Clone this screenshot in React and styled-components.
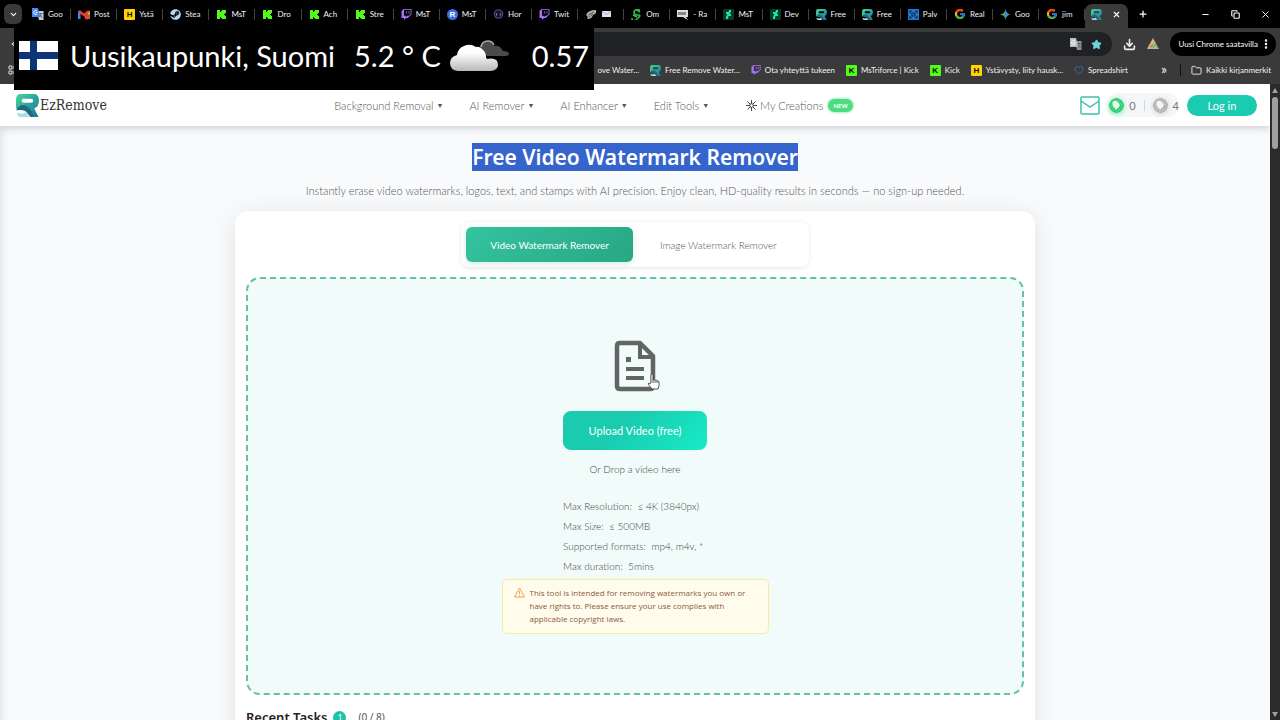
import React from 'react';
import styled, { createGlobalStyle, css } from 'styled-components';
import { ChevronDown, Minus, Copy, X, Plus, Star, Download, Folder, ArrowLeft, MoreVertical, Heart } from 'lucide-react';
import { FaSteam, FaTwitch } from 'react-icons/fa';
import { FcGoogle } from 'react-icons/fc';

const GlobalStyle = createGlobalStyle`
  * {
    box-sizing: border-box;
  }
  body {
    margin: 0;
    background: #000;
    font-family: Lato, 'Noto Sans', sans-serif;
  }
  button, a {
    font-family: inherit;
    color: inherit;
    text-decoration: none;
  }
  button {
    border: 0;
    padding: 0;
    background: none;
  }
  svg {
    display: block;
    flex: none;
  }
`;

const Browser = styled.div`
  position: relative;
  display: flex;
  flex-direction: column;
  height: 100vh;
  overflow: hidden;
`;

const chromeText = css`
  font-family: Lato, 'Noto Sans', sans-serif;
  font-size: 8px;
  white-space: nowrap;
  color: #f2f2f2;
`;

const TabStrip = styled.div`
  ${chromeText}
  display: flex;
  flex: none;
  height: 28px;
  background: #000;
`;

const TabSearch = styled.button`
  display: flex;
  align-items: center;
  justify-content: center;
  width: 18px;
  height: 20px;
  margin: 4px 3px 0 4px;
  border-radius: 6px;
  background: #3a3a3a;
  color: #fff;
`;

const TabList = styled.div`
  display: flex;
  flex: 1;
  min-width: 0;
`;

const Tab = styled.button`
  ${chromeText}
  display: flex;
  align-items: center;
  flex: 1 1 0;
  min-width: 0;
  gap: 4px;
  padding-left: 7px;
  text-align: left;
  background: linear-gradient(#444, #444) no-repeat right center / 1px 11px;
`;

const ActiveTab = styled.div`
  display: flex;
  align-items: center;
  justify-content: space-between;
  width: 43px;
  margin-top: 4px;
  padding: 0 7px 4px 6px;
  border-radius: 7px 7px 0 0;
  background: #3a3a3a;
  color: #fff;
`;

const StripButton = styled.button`
  display: flex;
  align-items: center;
  justify-content: center;
  width: 30px;
  height: 28px;
  color: #fff;
`;

const StripSpacer = styled.div`
  width: 32px;
`;

const Toolbar = styled.div`
  ${chromeText}
  display: flex;
  align-items: center;
  flex: none;
  height: 28px;
  padding: 4px 4px 0 10px;
  background: #3a3a3a;
`;

const AddressBar = styled.div`
  display: flex;
  align-items: center;
  justify-content: flex-end;
  flex: 1;
  gap: 9px;
  height: 24px;
  margin: 0 11px 0 60px;
  padding-right: 10px;
  border-radius: 12px;
  background: #202124;
`;

const ToolButton = styled.button`
  display: flex;
  margin-right: 11px;
  color: #eee;
`;

const UpdateButton = styled.button`
  ${chromeText}
  display: flex;
  align-items: center;
  gap: 2px;
  height: 24px;
  padding: 0 4px 0 8px;
  border-radius: 12px;
  background: #000;
  color: #fff;
`;

const BookmarksBar = styled.div`
  ${chromeText}
  display: flex;
  align-items: center;
  flex: none;
  height: 28px;
  padding: 0 9px 0 8px;
  background: #3a3a3a;
`;

const BookmarkList = styled.div`
  display: flex;
  justify-content: flex-end;
  flex: 1;
  gap: 11px;
  min-width: 0;
`;

const Bookmark = styled.a`
  display: flex;
  align-items: center;
  flex: none;
  gap: 4px;
`;

const MoreBookmarks = styled.button`
  margin: 0 13px 3px 33px;
  font-size: 14px;
  line-height: 14px;
`;

const BarDivider = styled.div`
  width: 1px;
  height: 12px;
  margin-right: 10px;
  background: #111;
`;

const Square = styled.span`
  display: flex;
  align-items: center;
  justify-content: center;
  flex: none;
  width: 11px;
  height: 11px;
  border-radius: ${({ $round }) => ($round ? '50%' : '1px')};
  background: ${({ $bg }) => $bg};
  color: ${({ $color }) => $color || '#fff'};
  font: 700 8px/11px 'Liberation Sans', sans-serif;
`;

const Weather = styled.div`
  position: absolute;
  top: 28px;
  left: 14px;
  display: flex;
  align-items: center;
  height: 62px;
  padding: 0 5px 7px;
  background: #000;
  color: #fff;
  font-size: 29px;
  white-space: nowrap;
`;

const Place = styled.span`
  margin: 0 19px 0 12px;
`;

const Degrees = styled.span`
  margin-right: 8px;
`;

const Clock = styled.span`
  margin-left: 22px;
`;

const Viewport = styled.div`
  display: flex;
  flex: 1;
  min-height: 0;
`;

const Page = styled.div`
  flex: 1;
  min-width: 0;
  overflow: hidden;
  background: #f9fafc;
  box-shadow: inset 8px 0 8px -6px #dfe1e4;
`;

const Scrollbar = styled.div`
  display: flex;
  flex-direction: column;
  align-items: center;
  justify-content: space-between;
  width: 10px;
  padding: 4px 0 3px;
  background: #2b2b2b;
`;

const ScrollUp = styled.div`
  border: 3px solid transparent;
  border-top: 0;
  border-bottom: 5px solid #a0a0a0;
`;

const ScrollDown = styled.div`
  border: 3px solid transparent;
  border-bottom: 0;
  border-top: 5px solid #a0a0a0;
`;

const Thumb = styled.div`
  width: 6px;
  height: 52px;
  margin: 4px 0 auto;
  border-radius: 3px;
  background: #9f9f9f;
`;

const Header = styled.header`
  display: flex;
  align-items: center;
  justify-content: space-between;
  height: 42px;
  padding: 0 13px 0 16px;
  background: #fff;
  box-shadow: 0 2px 8px rgba(0, 0, 0, 0.18);
`;

const Brand = styled.a`
  display: flex;
  align-items: center;
  gap: 1px;
  color: #333;
  font-family: 'DejaVu Serif Condensed', 'DejaVu Serif', serif;
  font-size: 14px;
`;

const Nav = styled.nav`
  display: flex;
  align-items: center;
  gap: 26px;
  color: #555;
  font-size: 11px;
  font-weight: 300;
`;

const NavItem = styled.a`
  display: flex;
  align-items: center;
  gap: 3px;
  margin-left: ${({ $apart }) => ($apart ? '11px' : '0')};
  white-space: nowrap;
`;

const Caret = styled.span`
  color: #555;
  font-family: 'DejaVu Sans', sans-serif;
  font-size: 7px;
  line-height: 7px;
  margin-top: 2px;
`;

const NewBadge = styled.span`
  margin-left: 2px;
  padding: 0 5px;
  border-radius: 7px;
  background: #4ade80;
  box-shadow: 0 0 3px #4ade80;
  color: #fff;
  font-size: 6px;
  font-weight: 700;
  line-height: 13px;
`;

const Account = styled.div`
  display: flex;
  align-items: center;
`;

const Credits = styled.div`
  display: flex;
  align-items: center;
  height: 24px;
  margin: 0 8px 0 7px;
  padding-left: 2px;
  border-radius: 12px;
  background: #f5f6f8;
  color: #777;
  font-size: 11px;
`;

const CoinMark = styled.svg`
  margin-right: 5px;
  border-radius: 50%;
  box-shadow: 0 1px 5px ${({ $glow }) => $glow};
`;

const CreditDivider = styled.span`
  width: 1px;
  height: 11px;
  margin: 0 8px;
  background: #d5d5d8;
`;

const LoginButton = styled.button`
  width: 70px;
  height: 21px;
  border-radius: 11px;
  background: #1acbb0;
  color: #fff;
  font-size: 11px;
`;

const Main = styled.main`
  display: flex;
  flex-direction: column;
  align-items: center;
`;

const Title = styled.h1`
  margin: 17px 0 0;
  background: #3564cc;
  color: #fff;
  font-family: 'Noto Sans', sans-serif;
  font-size: 21px;
  font-weight: 600;
  line-height: 28px;
`;

const Subtitle = styled.p`
  margin: 12px 0;
  color: #555;
  font-size: 11px;
  font-weight: 300;
  line-height: 16px;
`;

const Card = styled.section`
  display: flex;
  flex-direction: column;
  align-items: center;
  width: 100%;
  max-width: 800px;
  padding: 11px;
  border-radius: 14px;
  background: #fff;
  box-shadow: 0 4px 24px rgba(0, 0, 0, 0.1);
`;

const Switcher = styled.div`
  display: flex;
  padding: 5px;
  border-radius: 8px;
  background: #fff;
  box-shadow: 0 1px 4px rgba(0, 0, 0, 0.1);
`;

const SwitchButton = styled.button`
  height: 35px;
  padding: 0 27px;
  border-radius: 6px;
  color: #555;
  font-size: 10px;
  font-weight: 300;
  ${({ $active }) => $active && css`
    padding: 0 24px;
    background: linear-gradient(135deg, #34c3a0, #28a784);
    box-shadow: 0 2px 6px rgba(40, 167, 132, 0.2);
    color: #fff;
    font-weight: 400;
  `}
`;

const DropZone = styled.div`
  display: flex;
  flex-direction: column;
  align-items: center;
  width: 100%;
  margin-top: 10px;
  padding: 61px 0 59px;
  border: 2px dashed #68bfa7;
  border-radius: 14px;
  background: #f0fbfa;
  color: #444;
`;

const FileMark = styled.div`
  position: relative;
`;

const Pointer = styled.svg`
  position: absolute;
  top: 33px;
  left: 33px;
`;

const UploadButton = styled.button`
  height: 39px;
  margin-top: 19px;
  padding: 0 26px;
  border-radius: 8px;
  background: linear-gradient(135deg, #1acbb0 40%, #17ecc6);
  color: #fff;
  font-size: 11px;
`;

const DropHint = styled.p`
  margin: 12px 0 20px;
  font-size: 10px;
  font-weight: 300;
  line-height: 14px;
`;

const Limits = styled.ul`
  width: 144px;
  margin: 0;
  padding: 0;
  list-style: none;
  font-size: 10px;
  font-weight: 300;
  line-height: 20px;
  white-space: pre;
`;

const Notice = styled.div`
  display: flex;
  gap: 5px;
  width: 267px;
  margin-top: 3px;
  padding: 6px 11px 8px;
  border: 1px solid #fbe8a6;
  border-radius: 5px;
  background: #fffcee;
  color: #8a5a3c;
  font-family: 'Open Sans', 'Noto Sans', sans-serif;
  font-size: 8px;
  line-height: 13px;
`;

const NoticeText = styled.p`
  margin: 0;
  white-space: pre-line;
`;

const Tasks = styled.div`
  display: flex;
  align-items: center;
  align-self: flex-start;
  margin-top: 12px;
  font-family: 'Noto Sans', sans-serif;
  font-size: 10px;
  line-height: 20px;
  color: #555;
`;

const TasksTitle = styled.h2`
  margin: 0;
  color: #222;
  font-size: 13px;
  font-weight: 600;
`;

const TaskCount = styled.span`
  width: 13px;
  height: 13px;
  margin: 0 12px 0 6px;
  border-radius: 50%;
  background: #1fc2a8;
  color: #fff;
  font-size: 9px;
  line-height: 13px;
  text-align: center;
`;

const KickIcon = () => (
  <svg width="11" height="11" viewBox="0 0 11 11">
    <path fill="#53fc18" d="M1 1h3v2h1V2h1V1h4v3H9v1H8v1h1v1h1v3H6V9H5V8H4v2H1z" />
  </svg>
);

const EzIcon = ({ size = 11 }) => (
  <svg width={size} height={size} viewBox="0 0 24 26" preserveAspectRatio="xMidYMid slice">
    <defs>
      <linearGradient id="ez" x1="0" y1="0" x2="1" y2="1">
        <stop offset="0" stopColor="#4adb93" />
        <stop offset="0.500" stopColor="#2ba5a0" />
        <stop offset="1" stopColor="#256f8c" />
      </linearGradient>
    </defs>
    <path fill="url(#ez)" fillRule="evenodd" d="M0 16V7Q0 0 8 0h7q9 0 9 8 0 6-5 8l5 10h-7l-7-10zM8 6Q6 6 6 8t2 2h7q3 0 3-2t-3-2z" />
    <path fill="#1f6a80" d="M0 18q4-7 10-5 4 2 6 6l4 7h-4l-6-7q-4-2-10-1z" />
    <path fill="#a9dfe3" d="M1 20q5 3 9 0l5 6H6q-5-1-5-6z" />
  </svg>
);

const Coin = ({ rim, edge, glow }) => (
  <CoinMark width="15" height="15" viewBox="0 0 15 15" $glow={glow}>
    <circle cx="7.500" cy="7.500" r="7" fill={rim} stroke={edge} />
    <ellipse cx="7.500" cy="7.200" rx="3.200" ry="5" fill="#fff" opacity="0.850" transform="rotate(-35 7.500 7.500)" />
    <path fill="none" stroke={edge} strokeWidth="1.500" d="M8 11.500q3-1 3.500-4" />
  </CoinMark>
);

const TranslateIcon = ({ paper = '#c9cdd2', card = '#4c86ec' }) => (
  <svg width="12" height="12" viewBox="0 0 12 12">
    <path fill={paper} d="M5 3h6.500v9H7z" />
    <path fill={card} d="M0 0h6l2.500 9H0z" />
    <path fill="none" stroke="#fff" d="M5.500 4.500H3.500M5 3a2 2 0 1 0 .2 2.800" />
    <path fill="none" stroke="#44597c" strokeWidth="0.800" d="M7.500 5.500h3M9 5v1q0 2-1.500 3M8 7l2.500 3" />
  </svg>
);

const GmailIcon = () => (
  <svg width="12" height="11" viewBox="0 0 12 11">
    <path fill="#4285f4" d="M0 2h2.500v8H0z" />
    <path fill="#34a853" d="M9.500 4H12v6H9.500z" />
    <path fill="#fbbc04" d="M9.500 2H12v3L9.500 6z" />
    <path fill="none" stroke="#ea4335" strokeWidth="2.400" d="M1 2l5 4 5-4" />
    <circle cx="9" cy="8" r="2.500" fill="#ea4335" />
  </svg>
);

const SparkIcon = () => (
  <svg width="11" height="11" viewBox="0 0 12 12">
    <defs>
      <linearGradient id="spark">
        <stop offset="0" stopColor="#fbbc04" />
        <stop offset="0.350" stopColor="#34a853" />
        <stop offset="0.600" stopColor="#4285f4" />
        <stop offset="1" stopColor="#ea4335" />
      </linearGradient>
    </defs>
    <path fill="url(#spark)" d="M6 0q.8 5.200 6 6-5.200.8-6 6-.8-5.200-6-6 5.200-.8 6-6" />
  </svg>
);

const DeviantIcon = () => (
  <svg width="11" height="11" viewBox="0 0 11 11">
    <path fill="#06392f" d="M0 0h11v11H0z" />
    <path fill="#1fe5a0" d="M6 1h2v2L6.500 5H8v2H5.500L5 10H3V8l1.500-3H3V3h2.500z" />
  </svg>
);

const GhostIcon = () => (
  <svg width="11" height="12" viewBox="0 0 12 12">
    <circle cx="6" cy="6" r="4.500" fill="#171325" stroke="#51417c" strokeWidth="1.500" />
    <path stroke="#8a78c8" d="M4 5v3M8 5v3" />
  </svg>
);

const WingIcon = () => (
  <svg width="12" height="11" viewBox="0 0 12 11">
    <path fill="#b5b0ac" d="M1 6q2-5 10-5 1 4-3 5-1 4-6 4 2-2-1-4" />
    <path stroke="#55504c" d="M3 6l6-3M4 8l4-3" />
  </svg>
);

const CardIcon = () => (
  <svg width="10" height="8" viewBox="0 0 10 8">
    <path fill="#e6dff0" d="M1 1h9v6H1z" />
    <path fill="none" stroke="#b7a8cc" d="M1 1.500l4.500 3L10 1.500" />
  </svg>
);

const ChatIcon = () => (
  <svg width="12" height="11" viewBox="0 0 12 11">
    <path fill="#ddd" d="M0 1h11v7H9l2 3-5-3H0z" />
    <path stroke="#333" d="M2 3v3M4 3v3M6 3v3M8 3v3" />
  </svg>
);

const SIcon = () => (
  <svg width="11" height="11" viewBox="0 0 11 11">
    <path fill="none" stroke="#35b94d" strokeWidth="1.600" d="M9 1Q3 0 3 3t4 3-1 4-5-1M6 1l3 2M2 6l4 2" />
  </svg>
);

const GridIcon = () => (
  <svg width="11" height="11" viewBox="0 0 11 11">
    <path fill="#2377c9" d="M0 0h11v11H0z" />
    <path fill="none" stroke="#0b3157" strokeWidth="1.200" d="M2 4V2h2M7 2h2v2M9 7v2H7M4 9H2V7M4 4h3v3H4z" />
  </svg>
);

const AppsIcon = () => (
  <svg width="10" height="10" viewBox="0 0 10 10" fill="none" stroke="#ddd">
    <path d="M1 1h3v3H1zM6 1h3v3H6zM1 6h3v3H1zM6 6h3v3H6z" />
  </svg>
);

const ProfileIcon = () => (
  <svg width="12" height="12" viewBox="0 0 12 12">
    <path fill="#b8b5a0" d="M6 0l6 11H0z" />
    <path fill="none" stroke="#e6c52b" d="M1 10l5-8 2 5" />
    <path fill="none" stroke="#4caf50" d="M6 10l2-4 3 4" />
    <path stroke="#c14b7a" d="M3 9l3-2" />
  </svg>
);

const FinlandFlag = () => (
  <svg width="39" height="29" viewBox="0 0 39 29">
    <path fill="#fff" d="M0 0h39v29H0z" />
    <path fill="#0d3475" d="M11 0h7v29h-7zM0 11h39v7H0z" />
  </svg>
);

const Cloud = () => (
  <svg width="61" height="32" viewBox="0 0 61 32">
    <defs>
      <linearGradient id="cloud" x1="0" y1="0" x2="0" y2="1">
        <stop offset="0.300" stopColor="#fff" />
        <stop offset="1" stopColor="#b9b9b9" />
      </linearGradient>
    </defs>
    <path fill="#4b4b4b" d="M31 9q0-8 7-8 5 0 7 5 6-1 9 5 6 0 6 3 0 2-6 2H38z" />
    <path fill="none" stroke="#aaa" strokeWidth="1.500" d="M32 7q1-6 7-6 4 0 6 4" />
    <path fill="url(#cloud)" d="M9 31q-8-1-8-8 0-6 7-8 1-7 7-9 6-3 12 1 3-1 6 2 4 3 4 8 0 1 1 2 11-2 11 6 0 5-7 6z" />
  </svg>
);

const tabs = [
  { title: 'Goo', icon: <TranslateIcon /> },
  { title: 'Post', icon: <GmailIcon /> },
  { title: 'Ystä', icon: <Square $bg="#ffd400" $color="#111">H</Square> },
  { title: 'Stea', icon: <FaSteam size={11} color="#b9d8f2" /> },
  { title: 'MsT', icon: <KickIcon /> },
  { title: 'Dro', icon: <KickIcon /> },
  { title: 'Ach', icon: <KickIcon /> },
  { title: 'Stre', icon: <KickIcon /> },
  { title: 'MsT', icon: <FaTwitch size={11} color="#a970ff" /> },
  { title: 'MsT', icon: <Square $round $bg="#3e6fe0">R</Square> },
  { title: 'Hor', icon: <GhostIcon /> },
  { title: 'Twit', icon: <FaTwitch size={11} color="#a970ff" /> },
  { title: <CardIcon />, icon: <WingIcon /> },
  { title: 'Om', icon: <SIcon /> },
  { title: '- Ra', icon: <ChatIcon /> },
  { title: 'MsT', icon: <DeviantIcon /> },
  { title: 'Dev', icon: <DeviantIcon /> },
  { title: 'Free', icon: <EzIcon /> },
  { title: 'Free', icon: <EzIcon /> },
  { title: 'Palv', icon: <GridIcon /> },
  { title: 'Real', icon: <FcGoogle size={12} /> },
  { title: 'Goo', icon: <SparkIcon /> },
  { title: 'jim', icon: <FcGoogle size={12} /> },
];

const bookmarks = [
  { title: 'ove Water...' },
  { title: 'Free Remove Water...', icon: <EzIcon /> },
  { title: 'Ota yhteyttä tukeen', icon: <FaTwitch size={10} color="#a970ff" /> },
  { title: 'MsTriforce | Kick', icon: <Square $bg="#53fc18" $color="#000">K</Square> },
  { title: 'Kick', icon: <Square $bg="#53fc18" $color="#000">K</Square> },
  { title: 'Ystävysty, liity hausk...', icon: <Square $bg="#ffd400" $color="#111">H</Square> },
  { title: 'Spreadshirt', icon: <Heart size={10} color="#2f78b7" /> },
];

const menus = ['Background Removal', 'AI Remover', 'AI Enhancer', 'Edit Tools'];

const limits = [
  'Max Resolution:  ≤ 4K (3840px)',
  'Max Size:  ≤ 500MB',
  'Supported formats:  mp4, m4v, *',
  'Max duration:  5mins',
];

const App = () => (
  <>
    <GlobalStyle />
    <Browser>
      <TabStrip>
        <TabSearch aria-label="Search tabs"><ChevronDown size={9} strokeWidth={3} /></TabSearch>
        <TabList>
          {tabs.map((tab, index) => (
            <Tab key={index}>
              {tab.icon}
              {tab.title}
            </Tab>
          ))}
        </TabList>
        <ActiveTab><EzIcon /><X size={9} strokeWidth={3} /></ActiveTab>
        <StripButton aria-label="New tab"><Plus size={10} strokeWidth={3} /></StripButton>
        <StripSpacer />
        <StripButton aria-label="Minimize"><Minus size={9} strokeWidth={3} /></StripButton>
        <StripButton aria-label="Restore"><Copy size={9} strokeWidth={3} /></StripButton>
        <StripButton aria-label="Close"><X size={11} /></StripButton>
      </TabStrip>

      <Toolbar>
        <ArrowLeft size={10} />
        <AddressBar>
          <TranslateIcon paper="#8d9094" card="#bdbfc2" />
          <Star size={11} fill="#6fd6dc" color="#6fd6dc" />
        </AddressBar>
        <ToolButton aria-label="Downloads"><Download size={13} strokeWidth={3} /></ToolButton>
        <ToolButton aria-label="Profile"><ProfileIcon /></ToolButton>
        <UpdateButton>Uusi Chrome saatavilla <MoreVertical size={12} strokeWidth={3} /></UpdateButton>
      </Toolbar>

      <BookmarksBar>
        <AppsIcon />
        <BookmarkList>
          {bookmarks.map((bookmark, index) => (
            <Bookmark key={index} href="#">
              {bookmark.icon}
              {bookmark.title}
            </Bookmark>
          ))}
        </BookmarkList>
        <MoreBookmarks>»</MoreBookmarks>
        <BarDivider />
        <Bookmark href="#"><Folder size={11} />Kaikki kirjanmerkit</Bookmark>
      </BookmarksBar>

      <Viewport>
        <Page>
          <Header>
            <Brand href="#"><EzIcon size={23} />EzRemove</Brand>
            <Nav>
              {menus.map(menu => (
                <NavItem key={menu} href="#">{menu} <Caret>▼</Caret></NavItem>
              ))}
              <NavItem href="#" $apart>
                <svg width="11" height="11" viewBox="0 0 11 11" fill="none" stroke="#444">
                  <path d="M5.500 0v11M0 5.500h11M1.500 1.500l8 8M9.500 1.500l-8 8" />
                  <circle cx="5.500" cy="5.500" r="1.800" fill="#fff" />
                </svg>
                My Creations
                <NewBadge>NEW</NewBadge>
              </NavItem>
            </Nav>
            <Account>
              <svg width="20" height="19" viewBox="0 0 20 19" fill="none" stroke="#3fbfae" strokeWidth="1.500">
                <rect x="1" y="1" width="18" height="17" rx="1" />
                <path d="M1 5l9 6 9-6" />
              </svg>
              <Credits>
                <Coin rim="#3fd583" edge="#22b866" glow="#6df0a5" />0
                <CreditDivider />
                <Coin rim="#bdbdbd" edge="#a2a2a2" glow="#ccc" />4
              </Credits>
              <LoginButton>Log in</LoginButton>
            </Account>
          </Header>

          <Main>
            <Title>Free Video Watermark Remover</Title>
            <Subtitle>
              Instantly erase video watermarks, logos, text, and stamps with AI precision. Enjoy clean, HD-quality results in seconds — no sign-up needed.
            </Subtitle>
            <Card>
              <Switcher>
                <SwitchButton $active>Video Watermark Remover</SwitchButton>
                <SwitchButton>Image Watermark Remover</SwitchButton>
              </Switcher>
              <DropZone>
                <FileMark>
                  <svg width="42" height="52" viewBox="0 0 42 52">
                    <path fill="none" stroke="#5f6664" strokeWidth="4.500" strokeLinejoin="round" d="M6 3h20l13 13v30q0 3-3 3H6q-3 0-3-3V6q0-3 3-3z" />
                    <path fill="none" stroke="#5f6664" strokeWidth="4" d="M26 3v14h13" />
                    <path fill="#5f6664" d="M12 17h5v5h-5zM12 27h18v4H12zM12 36h18v4H12z" />
                  </svg>
                  <Pointer width="13" height="17" viewBox="0 0 13 17">
                    <path fill="#fff" stroke="#333" strokeWidth="0.800" d="M4 10V2q0-1 1-1t1 1v5q2-1 2 .5 2-1 2 .5 2-.5 2 1v4l-1 3H5l-4-5q0-2 3 0M6 7v3M8 8v2M10 8v2" />
                  </Pointer>
                </FileMark>
                <UploadButton>Upload Video (free)</UploadButton>
                <DropHint>Or Drop a video here</DropHint>
                <Limits>
                  {limits.map(limit => <li key={limit}>{limit}</li>)}
                </Limits>
                <Notice>
                  <svg width="11" height="12" viewBox="0 0 11 12" fill="none" stroke="#e9a04a">
                    <path strokeLinejoin="round" d="M5.500 2l5 9H.5zM5.500 5v3M5.500 9v1" />
                  </svg>
                  <NoticeText>
                    {'This tool is intended for removing watermarks you own or\nhave rights to. Please ensure your use complies with\napplicable copyright laws.'}
                  </NoticeText>
                </Notice>
              </DropZone>
              <Tasks>
                <TasksTitle>Recent Tasks</TasksTitle>
                <TaskCount>1</TaskCount>
                (0 / 8)
              </Tasks>
            </Card>
          </Main>
        </Page>
        <Scrollbar>
          <ScrollUp />
          <Thumb />
          <ScrollDown />
        </Scrollbar>
      </Viewport>

      <Weather>
        <FinlandFlag />
        <Place>Uusikaupunki, Suomi</Place>
        <Degrees>5.2 ° C</Degrees>
        <Cloud />
        <Clock>0.57</Clock>
      </Weather>
    </Browser>
  </>
);

export default App;
